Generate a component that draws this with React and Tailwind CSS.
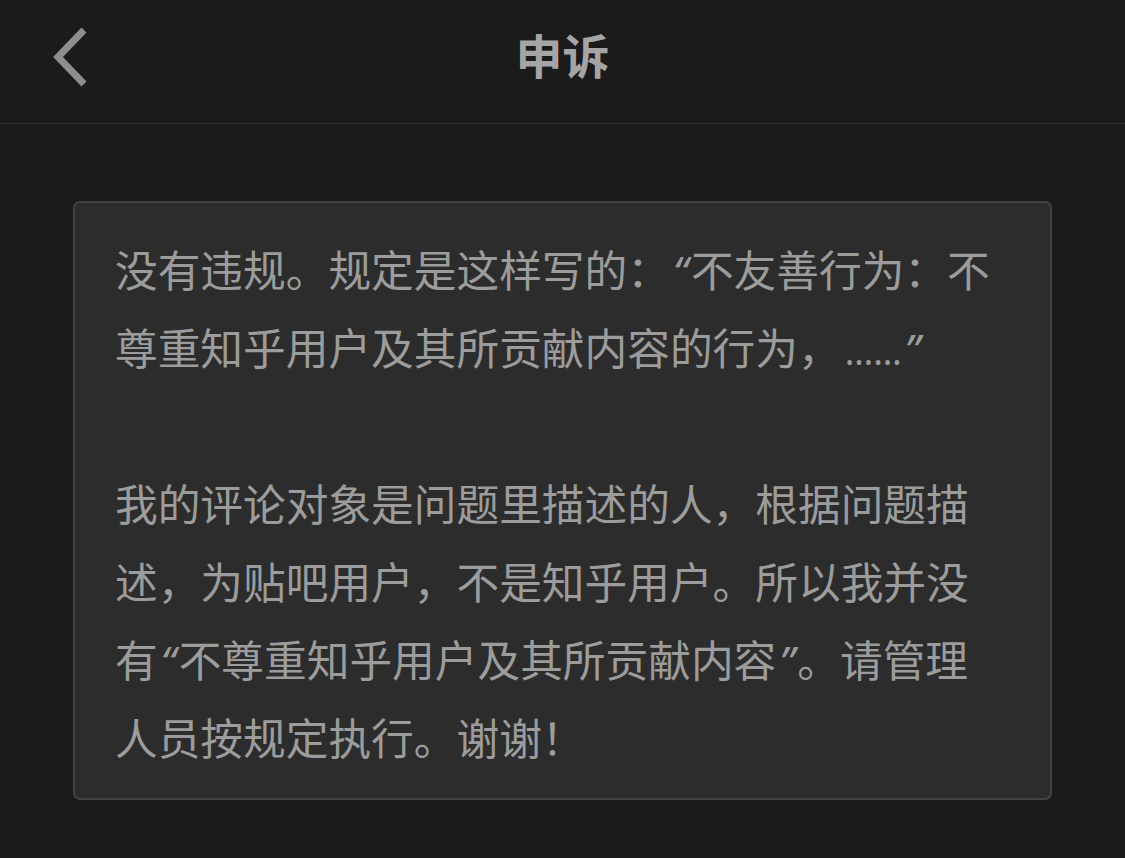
import React from 'react'

const font = { fontFamily: '"Noto Sans CJK SC", "Noto Sans", sans-serif' }

const BackIcon = () => (
  <svg width="40" height="62" viewBox="0 0 40 62" fill="none">
    <path d="M34 4 L8 31 L34 58" stroke="#8e8e8e" strokeWidth="7" strokeLinecap="butt" strokeLinejoin="miter" />
  </svg>
)

// quotes in the reference are half width, Latin style
const Q = ({ children }) => (
  <span className="inline-block w-[21px] text-center font-['Noto_Sans',sans-serif] italic leading-none">{children}</span>
)

export default function App() {
  return (
    <div className="min-h-[858px] w-[1125px] bg-[#1b1b1b]" style={font}>
      <header className="relative flex h-[124px] items-center justify-center border-b border-[#333333]">
        <button className="absolute left-[50px] top-[26px]">
          <BackIcon />
        </button>
        <h1 className="-mt-[16px] text-[47px] font-bold leading-none text-[#a5a5a5]">申诉</h1>
      </header>

      <div className="mx-[73px] mt-[77px] rounded-[7px] border-2 border-[#424242] bg-[#2c2c2c] px-[40px] pt-[26px] pb-[23px]">
        <p className="text-[42.7px] leading-[78px] text-[#9c9c9c]">
          没有违规。规定是这样写的：<Q>“</Q>不友善行为：不尊重知乎用户及其所贡献内容的行为，
          <span className="ml-[4px] font-['Noto_Sans',sans-serif] text-[36px] leading-none">……</span>
          <Q>”</Q>
        </p>
        <p className="text-[42.7px] leading-[78px] text-[#9c9c9c]">&nbsp;</p>
        <p className="text-[42.7px] leading-[78px] text-[#9c9c9c]">
          我的评论对象是问题里描述的人，根据问题描述，为贴吧用户，不是知乎用户。所以我并没有<Q>“</Q>不尊重知乎用户及其所贡献内容<Q>”</Q>。请管理人员按规定执行。谢谢！
        </p>
      </div>
    </div>
  )
}
